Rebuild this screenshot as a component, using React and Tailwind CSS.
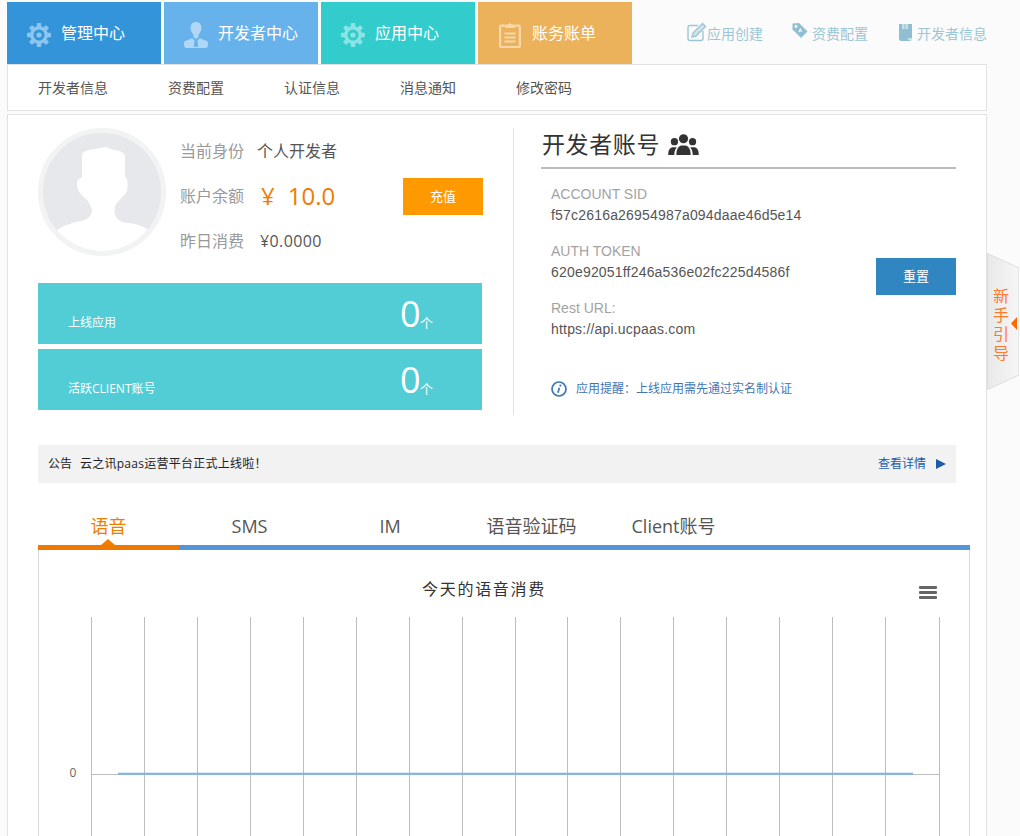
import React from "react";

const FONT = "font-['Open_Sans','Noto_Sans_CJK_SC',sans-serif]";
const ARIAL = "font-['Liberation_Sans','Noto_Sans_CJK_SC',sans-serif]";

function Gear({ color }) {
  const teeth = [0, 45, 90, 135, 180, 225, 270, 315];
  return (
    <svg width="24" height="24" viewBox="0 0 24 24">
      {teeth.map((a) => (
        <rect key={a} x="9.800" y="0" width="4.400" height="5" rx="0.800" fill={color} transform={`rotate(${a} 12 12)`} />
      ))}
      <circle cx="12" cy="12" r="7.200" fill="none" stroke={color} strokeWidth="3.400" />
      <circle cx="12" cy="12" r="2.600" fill={color} />
    </svg>
  );
}

function Person({ color }) {
  return (
    <svg width="24" height="26" viewBox="0 0 24 26">
      <path d="M12 0c3.400 0 5.400 2.400 5.400 5.800 0 3-1.400 5.600-3 7v2.200l-2.400 2-2.400-2v-2.200c-1.600-1.400-3-4-3-7C6.600 2.400 8.600 0 12 0z" fill={color} />
      <path d="M8 16.200 0.400 19.400C-0.200 22 0 24.400 0.800 25.600c3 .6 7 .8 11.200 .8s8.200-.2 11.200-.8c.8-1.200 1-3.600.4-6.200L16 16.200l-2.600 2.200 1 6.400h-4.800l1-6.400z" fill={color} />
    </svg>
  );
}

function Clipboard({ color }) {
  return (
    <svg width="22" height="26" viewBox="0 0 22 26" fill="none" stroke={color} strokeWidth="2.200">
      <path d="M6 3.600H2.400a1.300 1.300 0 0 0-1.300 1.300v18.800a1.300 1.300 0 0 0 1.300 1.300h17.200a1.300 1.300 0 0 0 1.300-1.300V4.900a1.300 1.300 0 0 0-1.300-1.300H16" />
      <path d="M6.500 5.500V3h2.800a1.800 1.800 0 0 1 3.400 0h2.800v2.500z" fill={color} strokeWidth="1" />
      <path d="M5.500 11.500h11M5.500 15.500h11M5.500 19.500h11" strokeWidth="2" />
    </svg>
  );
}

function MainTab({ bg, label, icon }) {
  return (
    <div className={`flex h-full w-[154px] items-center ${bg}`}>
      <div className="ml-5 mt-1 flex w-6 justify-center">{icon}</div>
      <span className="ml-2.5 text-[16px] leading-none text-white">{label}</span>
    </div>
  );
}

function QuickLink({ icon, label, width }) {
  return (
    <div className={`flex items-center ${width}`}>
      {icon}
      <span className="text-[14px] leading-none text-[#9cc6d5]">{label}</span>
    </div>
  );
}

function StatCard({ label }) {
  return (
    <div className="relative h-[61px] w-[444px] bg-[#52ccd5] text-white">
      <span className="absolute left-[30px] top-[33px] text-[12px] leading-[14px]">{label}</span>
      <span className="absolute left-[362px] top-[7px] text-[36px] font-normal leading-[48px]">0</span>
      <span className="absolute left-[382px] top-[33px] text-[13px] leading-[14px]">个</span>
    </div>
  );
}

function InfoRow({ label, children }) {
  return (
    <div className="flex h-[45px] items-center">
      <span className="w-[64px] text-[16px] leading-none text-[#999999]">{label}</span>
      {children}
    </div>
  );
}

function Credential({ label, value, className }) {
  return (
    <div className={`${ARIAL} ${className}`}>
      <div className="text-[14px] leading-[21px] text-[#a3a3a3]">{label}</div>
      <div className="text-[14px] leading-[21px] tracking-[0.19px] text-[#555555]">{value}</div>
    </div>
  );
}

function Chart() {
  const xs = [];
  for (let i = 0; i < 16; i++) xs.push(52.5 + i * 52.94);
  xs.push(900.5);
  return (
    <svg width="930" height="220" viewBox="0 0 930 220" className="block">
      {xs.map((x) => (
        <line key={x} x1={Math.round(x - 0.5) + 0.5} x2={Math.round(x - 0.5) + 0.5} y1="0" y2="220" stroke="#bdbdbd" strokeWidth="1" />
      ))}
      <line x1="53" x2="900" y1="157.500" y2="157.500" stroke="#bdbdbd" strokeWidth="1" />
      <line x1="79" x2="874" y1="156.800" y2="156.800" stroke="#7cb5ec" strokeWidth="2" />
      <text x="34" y="160" textAnchor="middle" fontSize="12" fill="#666666" fontFamily="Open Sans, sans-serif">0</text>
    </svg>
  );
}

export default function App() {
  return (
    <div className={`relative h-[836px] w-[1020px] overflow-hidden bg-[#fbfbfb] pl-[7px] pt-[2px] ${FONT}`}>
      <div className="flex h-[62px]">
        <div className="flex h-full gap-[3px]">
          <MainTab bg="bg-[#3394d9]" label="管理中心" icon={<Gear color="#8cc5ef" />} />
          <MainTab bg="bg-[#68b2ec]" label="开发者中心" icon={<Person color="#b0d8f6" />} />
          <MainTab bg="bg-[#33cccc]" label="应用中心" icon={<Gear color="#8be3e3" />} />
          <MainTab bg="bg-[#ecb25b]" label="账务账单" icon={<Clipboard color="#f6d8ab" />} />
        </div>
        <div className="ml-[55px] flex items-center pt-[2px]">
          <QuickLink
            width="w-[105px]"
            label="应用创建"
            icon={
              <svg width="20" height="20" viewBox="0 0 20 20" fill="none" className="-mt-1" stroke="#9cc6d5" strokeWidth="1.400">
                <path d="M11 3.500H3a2 2 0 0 0-2 2V16.500a2 2 0 0 0 2 2h11a2 2 0 0 0 2-2V9" />
                <path d="M5 15l1-4L15.500 1.500l3 3L9 14z" fill="#cfe3ea" />
              </svg>
            }
          />
          <QuickLink
            width="w-[106px]"
            label="资费配置"
            icon={
              <svg width="20" height="18" viewBox="0 0 20 18" className="-mt-2">
                <path d="M0.500 2.500V8.500L9 17 15.500 10.500 7 2z" fill="#8fbfd0" />
                <circle cx="4" cy="5.500" r="1.400" fill="#fbfbfb" />
                <path d="M7 8.800l3 1.800M9 7.500l-2 3.500" stroke="#fbfbfb" strokeWidth="1.200" />
              </svg>
            }
          />
          <QuickLink
            width="w-[90px]"
            label="开发者信息"
            icon={
              <svg width="19" height="19" viewBox="0 0 19 19" className="-mt-1">
                <path d="M1 1h13v14l-1 3H3a2 2 0 0 1-2-2z" fill="#8fbfd0" />
                <path d="M4 1h2.500v5H4zM7.500 1H10v5H7.500z" fill="#c8dfe8" />
                <path d="M13 18l1-3-5 .5z" fill="#d9e9ef" />
              </svg>
            }
          />
        </div>
      </div>

      <nav className="flex h-[47px] w-[980px] items-center gap-[60px] border border-[#e2e2e2] bg-white pl-[30px] text-[14px] leading-none text-[#555555]">
        <span>开发者信息</span>
        <span>资费配置</span>
        <span>认证信息</span>
        <span>消息通知</span>
        <span>修改密码</span>
      </nav>

      <main className="mt-[3px] h-[730px] w-[980px] border border-[#e2e2e2] bg-white pl-[30px]">
        <section className="mt-[13px] flex h-[287px]">
          <div className="w-[445px]">
            <div className="flex h-[128px] items-start">
              <div className="relative h-[128px] w-[128px] shrink-0 overflow-hidden rounded-full border-[5px] border-[#f2f3f3] bg-[#e6e8ec]">
                <svg width="118" height="118" viewBox="0 0 118 118" className="absolute left-0 top-0">
                  <path
                    d="M39 24C39 19 42 18 46 17L62 14C66 14 68 17 72 17C78 18 82 20 82 24L82 44L84 46C85 50 85 56 83 60L73 71C71 74 71 80 73 84C76 88 80 90 86 90C94 91 100 93 104 96L118 118H0L14 97C20 93 26 91 33 89C42 88 48 85 49 78C49 74 46 70 44 67L37 60C34 56 33 50 35 47L39 44Z"
                    fill="#ffffff"
                  />
                </svg>
              </div>
              <div className="ml-[14px] w-[303px]">
                <InfoRow label="当前身份">
                  <span className="ml-[13px] text-[16px] leading-none text-[#555555]">个人开发者</span>
                </InfoRow>
                <div className="flex items-center justify-between">
                  <InfoRow label="账户余额">
                    <span className="ml-[17px] text-[24px] leading-none text-[#ef7d00]">¥</span>
                    <span className="ml-[13px] text-[24px] leading-none text-[#ef7d00]">10.0</span>
                  </InfoRow>
                  <button className="mt-[2px] flex h-[37px] w-[80px] items-center justify-center bg-[#ff9900] text-[13px] text-white">充值</button>
                </div>
                <InfoRow label="昨日消费">
                  <span className="ml-[16px] text-[16px] leading-none tracking-[0.4px] text-[#555555]">¥0.0000</span>
                </InfoRow>
              </div>
            </div>
            <div className="mt-[27px] flex flex-col gap-[5px]">
              <StatCard label="上线应用" />
              <StatCard label="活跃CLIENT账号" />
            </div>
          </div>

          <div className="ml-[30px] w-[443px] border-l border-[#e2e2e2] pl-[27px]">
            <div className="flex h-[41px] w-[415px] items-center border-b-2 border-[#bbbbbb] pb-[7px]">
              <span className="ml-px text-[23px] leading-none tracking-[0.6px] text-[#333333]">开发者账号</span>
              <svg width="33" height="21" viewBox="0 0 32 22" className="ml-[7px]" fill="#333333">
                <circle cx="16" cy="5" r="4.800" />
                <path d="M8.500 22c0-6 2-9 5-10h5c3 1 5 4 5 10z" />
                <circle cx="6.500" cy="8" r="3.800" />
                <path d="M0 22c0-5 1.500-7 4-8h5c-1.500 2-2.500 4-2.700 8z" />
                <circle cx="25.500" cy="8" r="3.800" />
                <path d="M32 22c0-5-1.500-7-4-8h-5c1.500 2 2.500 4 2.700 8z" />
              </svg>
            </div>
            <div className="relative pl-[10px]">
              <Credential className="mt-[15px]" label="ACCOUNT SID" value="f57c2616a26954987a094daae46d5e14" />
              <div className="flex items-start justify-between">
                <Credential className="mt-[15px]" label="AUTH TOKEN" value="620e92051ff246a536e02fc225d4586f" />
                <button className="mt-[32px] flex h-[37px] w-[80px] items-center justify-center bg-[#2f86c1] text-[13px] text-white">重置</button>
              </div>
              <Credential className="mt-[3px]" label="Rest URL:" value="https://api.ucpaas.com" />
              <div className="mt-[41px] flex items-center">
                <svg width="16" height="16" viewBox="0 0 16 16">
                  <circle cx="8" cy="8" r="7" fill="none" stroke="#3f77b5" strokeWidth="1.700" />
                  <circle cx="9.400" cy="4.600" r="1.100" fill="#3f77b5" />
                  <path d="M8.300 6.800 7 11.800" stroke="#3f77b5" strokeWidth="1.700" />
                </svg>
                <span className="ml-[9px] text-[12px] leading-none text-[#3f77b5]">应用提醒：上线应用需先通过实名制认证</span>
              </div>
            </div>
          </div>
        </section>

        <div className="mt-[30px] flex h-[38px] w-[918px] items-center bg-[#f2f2f2] pl-[10px] pr-[10px] text-[12px] leading-none">
          <span className="text-[#222222]">公告</span>
          <span className="ml-[8px] tracking-[0.25px] text-[#222222]">云之讯paas运营平台正式上线啦！</span>
          <span className="ml-auto text-[#1c5ca8]">查看详情</span>
          <svg width="10" height="10" viewBox="0 0 10 10" className="ml-[10px]">
            <path d="M0 0l10 5-10 5z" fill="#1c5ca8" />
          </svg>
        </div>

        <div className="mt-[22px] flex h-[40px] w-[932px] items-center pt-[2px] text-[18px] leading-none text-[#555555]">
          <div className="relative flex h-full w-[141px] items-center justify-center text-[#ef7d00]">
            语音
            <span className="absolute bottom-0 left-[63px] h-0 w-0 border-x-[7px] border-b-[6px] border-x-transparent border-b-[#ef7d00]" />
          </div>
          <div className="flex w-[141px] justify-center">SMS</div>
          <div className="flex w-[140px] justify-center">IM</div>
          <div className="flex w-[143px] justify-center">语音验证码</div>
          <div className="flex w-[141px] justify-center">Client账号</div>
        </div>
        <div className="flex h-[5px] w-[932px] bg-[#5594d9]">
          <div className="h-full w-[141px] bg-[#ef7800]" />
        </div>

        <div className="relative h-[287px] w-[932px] border-x border-[#d8d8d8] bg-white">
          <div className="flex h-[67px] items-start justify-center pr-[40px] pt-[28px] text-[16px] leading-[22px] tracking-[1.700px] text-[#333333]">今天的语音消费</div>
          <Chart />
          <div className="absolute left-[880px] top-[36px] flex h-[13px] w-[18px] flex-col justify-between">
            <div className="h-[3px] rounded-[1px] bg-[#666666]" />
            <div className="h-[3px] rounded-[1px] bg-[#666666]" />
            <div className="h-[3px] rounded-[1px] bg-[#666666]" />
          </div>
        </div>
      </main>

      <div className="absolute left-[987px] top-[253px] h-[137px] w-[32px]">
        <svg width="32" height="137" viewBox="0 0 32 137" className="absolute left-0 top-0">
          <defs>
            <linearGradient id="guideFill" x1="0" x2="1" y1="0" y2="0">
              <stop offset="0" stopColor="#e9e9e9" />
              <stop offset="1" stopColor="#f6f6f6" />
            </linearGradient>
          </defs>
          <path d="M0.500 0.500 32 15V122L0.500 136.500z" fill="url(#guideFill)" stroke="#dddddd" strokeWidth="1" />
          <path d="M30 64v13l-6-6.500z" fill="#ff6600" />
        </svg>
        <div className="absolute left-[6px] top-[34px] w-4 break-all text-[16px] leading-[19px] text-[#ff7a2a]">新手引导</div>
      </div>
    </div>
  );
}
